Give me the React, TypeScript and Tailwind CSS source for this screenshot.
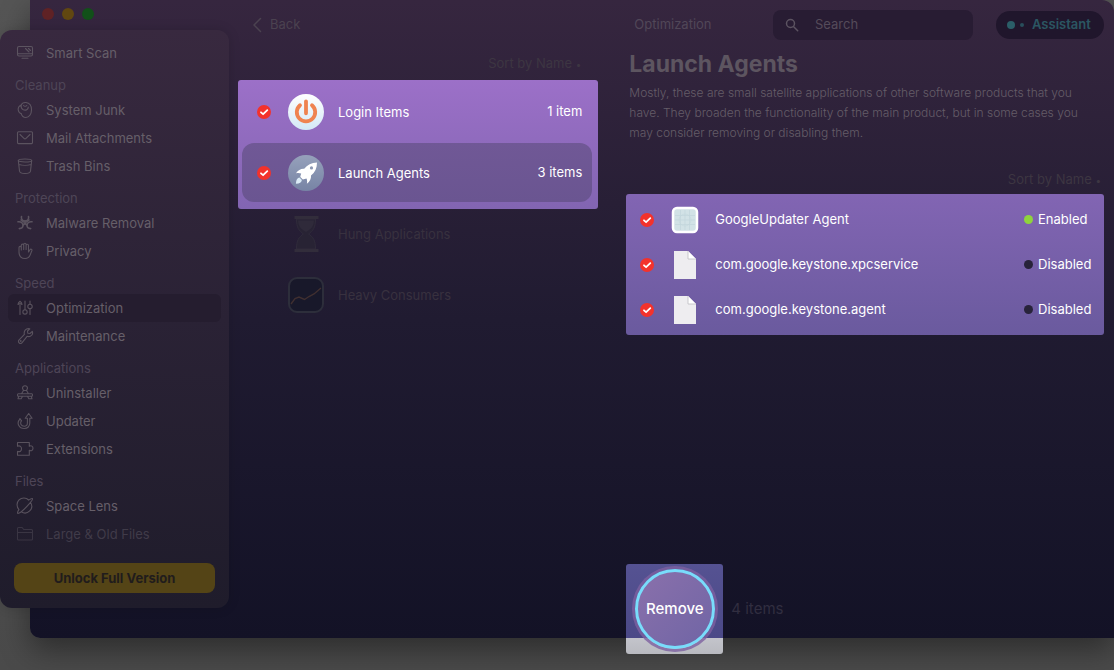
import type { ReactNode } from 'react'

type NavItem = { label: string; icon: ReactNode; active?: boolean; faded?: boolean }
type NavGroup = { title?: string; items: NavItem[] }

function Glyph({ children }: { children: ReactNode }) {
  return (
    <svg
      viewBox="0 0 18 18"
      className="size-[18px] shrink-0 opacity-80"
      fill="none"
      stroke="currentColor"
      strokeWidth="1.1"
      strokeLinecap="round"
      strokeLinejoin="round"
      aria-hidden="true"
    >
      {children}
    </svg>
  )
}

const groups: NavGroup[] = [
  {
    items: [
      {
        label: 'Smart Scan',
        icon: (
          <Glyph>
            <rect x="1.5" y="2.5" width="15" height="9.5" rx="1.5" />
            <path d="M1.5 9.8h15M6 14.3h6M9.5 4.5l3.500 3.500M12.500 4.500l2 2" />
          </Glyph>
        ),
      },
    ],
  },
  {
    title: 'Cleanup',
    items: [
      {
        label: 'System Junk',
        icon: (
          <Glyph>
            <path d="M5 4.2C6 2 8 1.3 10 1.5c3.5.4 5.5 3.5 5.5 7.3 0 4.300-2.300 7.700-5.700 7.700-2.500 0-4-1.700-4.600-3.800" />
            <path d="M5 4.200C3 5 2 6.600 2.200 8.800c.2 1.900 1.300 3.300 3 3.900M5 4.200c0 2 .5 3.800 2.300 4.600 2.500 1 5-.3 5-2.800M7.500 4.500c.8.900 2.500 1 3.300 0" />
          </Glyph>
        ),
      },
      {
        label: 'Mail Attachments',
        icon: (
          <Glyph>
            <rect x="1.500" y="2.800" width="15" height="11.800" rx="1" />
            <path d="m4 5.500 4 3.800c.6.600 1.400.6 2 0l4-3.800" />
          </Glyph>
        ),
      },
      {
        label: 'Trash Bins',
        icon: (
          <Glyph>
            <ellipse cx="9" cy="3.500" rx="6.700" ry="1.500" />
            <path d="M2.300 3.500 3.500 14c.2 1.700 2.300 2.500 5.500 2.500s5.300-.8 5.500-2.500l1.200-10.500M3 7.500c3 1 9 1 12 0" />
          </Glyph>
        ),
      },
    ],
  },
  {
    title: 'Protection',
    items: [
      {
        label: 'Malware Removal',
        icon: (
          <Glyph>
            <g strokeWidth="1.600">
              <path d="M5.500 2.500C4.800 5 6.500 7 9 7s4.200-2 3.500-4.500" />
              <path d="M2 7.800c2.500-.5 5 .8 5 3.500 0 2.300-1.600 3.300-3.700 3.300" />
              <path d="M16 7.800c-2.500-.5-5 .8-5 3.500 0 2.300 1.600 3.300 3.700 3.300" />
              <path d="M9 7v2.500M7 11l2-1.500L11 11M5 6l2.500 2M13 6l-2.500 2" />
            </g>
          </Glyph>
        ),
      },
      {
        label: 'Privacy',
        icon: (
          <Glyph>
            <path d="M3 10V5.500a1.100 1.100 0 0 1 2.300 0V8M5.300 8V3.300a1.200 1.200 0 0 1 2.400 0V7.500M7.700 7V2.400a1.200 1.200 0 0 1 2.400 0V7.500M10.100 7.500V3.400a1.200 1.200 0 0 1 2.400 0V10l1.500-2.300c.7-1.100 2.300-.5 1.900.8l-1.800 4.600c-.9 2.200-2.500 3.400-5 3.400-3.800 0-6.100-2.400-6.100-6.500" />
          </Glyph>
        ),
      },
    ],
  },
  {
    title: 'Speed',
    items: [
      {
        label: 'Optimization',
        active: true,
        icon: (
          <Glyph>
            <path d="M4 15.500V5.800M9 2v8.800M14 15.500V9.800M14 5V2" />
            <path d="M2 5.500C2 3.800 3 2.900 4 2.200c1 .7 2 1.600 2 3.300L4 4.600zM9 10.800a2 2 0 1 0 0 4.300 2 2 0 0 0 0-4.300zM14 5.200a2.200 2.200 0 1 0 0 4.400 2.200 2.200 0 0 0 0-4.400z" />
          </Glyph>
        ),
      },
      {
        label: 'Maintenance',
        icon: (
          <Glyph>
            <path d="M13.800 1.800 11.500 4l.3 2.200 2.200.3 2.300-2.200c.7 2.300-.2 4.300-2 5-1.200.5-2.300.3-3.200 0l-5 6.300a2 2 0 0 1-3.200-2.500l5.500-5.700C7.600 4.500 9.400 1 13.800 1.800z" />
            <circle cx="4.700" cy="14" r=".4" />
          </Glyph>
        ),
      },
    ],
  },
  {
    title: 'Applications',
    items: [
      {
        label: 'Uninstaller',
        icon: (
          <Glyph>
            <path d="M6.500 4.200a2.500 2.500 0 1 1 5 0L10.500 6.500h-3zM7.500 6.500l-2 3.200M10.500 6.500l2 3.200M2.300 9.700h13.400c1.100 0 1.100 2.600 0 2.600H2.300c-1.100 0-1.100-2.600 0-2.600zM2.700 12.300l-.7 2.500h3.200l1.300-2.500M15.300 12.300l.7 2.500h-3.200l-1.300-2.500" />
          </Glyph>
        ),
      },
      {
        label: 'Updater',
        icon: (
          <Glyph>
            <path d="M4 6.800c-4 4.300-1 9.700 4.200 9.700 3.400 0 5.600-2.200 5.600-5.500V6.300h2.300L12.700 1.500 9.200 6.300h2.200V11c0 2-1.200 3.200-3.200 3.200-3.200 0-4.400-2.900-2.800-5.400" />
            <path d="M5.600 8.800 4 6.800" />
          </Glyph>
        ),
      },
      {
        label: 'Extensions',
        icon: (
          <Glyph>
            <path d="M1.500 2.500h11.800v3.800c2-1.200 3.700 0 3.700 2s-1.700 3.200-3.700 2v4.900H1.500v-3.800c2.500.9 4-.6 4-2.600s-1.500-3.500-4-2.600z" />
          </Glyph>
        ),
      },
    ],
  },
  {
    title: 'Files',
    items: [
      {
        label: 'Space Lens',
        icon: (
          <Glyph>
            <path d="M14.500 5.500a6.700 6.700 0 0 1-9.300 9.300M3 12.600A6.700 6.700 0 0 1 12.700 3M12.500 3.100c2-1.300 3.500-1.900 4-1.500 1.100 1.100-10 13.500-14 14.700-1.500.4-1.200-1.200.4-3.700" />
          </Glyph>
        ),
      },
      {
        label: 'Large & Old Files',
        faded: true,
        icon: (
          <Glyph>
            <path d="M1.500 14V3.500c0-.6.400-1 1-1h3.700l1.500 2h7.800c.6 0 1 .4 1 1V14c0 .6-.4 1-1 1h-13c-.6 0-1-.4-1-1zM1.500 7.500h15" />
          </Glyph>
        ),
      },
    ],
  },
]

function Sidebar() {
  return (
    <aside className="z-10 col-start-1 col-end-3 row-start-1 mt-[30px] self-start rounded-xl bg-linear-to-b from-[#38293f] via-[#2a2235] to-[#1f1c2b] pt-[9px] pb-[15px] text-[#665f69] shadow-[0_0_12px_rgba(0,0,0,0.15)]">
      <nav>
        {groups.map((group, i) => (
          <section key={i}>
            {group.title && (
              <h2 className="h-[29px] px-[15px] pt-2 leading-[21px] text-[#4e4557]">{group.title}</h2>
            )}
            <ul>
              {group.items.map((item) => (
                <li key={item.label} className="px-2">
                  <a
                    href="#"
                    className={`flex h-7 items-center gap-3 rounded-md px-2 ${item.active ? 'bg-[#251d2f]' : ''} ${item.faded ? 'text-[#403b49]' : ''}`}
                  >
                    {item.icon}
                    <span className="pt-0.5">{item.label}</span>
                  </a>
                </li>
              ))}
            </ul>
          </section>
        ))}
      </nav>
      <div className="px-3.5 pt-[15px]">
        <button type="button" className="h-[30px] w-full rounded-lg bg-[#544416] pt-0.5 font-bold text-[#211c1c]">
          Unlock Full Version
        </button>
      </div>
    </aside>
  )
}

function RedCheck({ label }: { label: string }) {
  return (
    <label className="relative flex size-3.5 shrink-0">
      <input
        type="checkbox"
        defaultChecked
        aria-label={label}
        className="size-3.5 appearance-none rounded-full border border-white/20 checked:border-transparent checked:bg-[#f3322c]"
      />
      <svg viewBox="0 0 14 14" className="pointer-events-none absolute inset-0" fill="none" stroke="#fff" strokeWidth="1.8" strokeLinecap="round" strokeLinejoin="round" aria-hidden="true">
        <path d="m4 7.300 2.100 1.900L10.300 5.200" />
      </svg>
    </label>
  )
}

function PowerIcon() {
  return (
    <svg viewBox="0 0 36 36" className="size-9 shrink-0" aria-hidden="true">
      <defs>
        <linearGradient id="power-bg" x1="0" y1="0" x2="0" y2="1">
          <stop offset="0" stopColor="#ffffff" />
          <stop offset="1" stopColor="#d3e8f6" />
        </linearGradient>
      </defs>
      <circle cx="18" cy="18" r="18" fill="url(#power-bg)" />
      <path d="M12 11.200a9.200 9.200 0 1 0 12 0M18 7.300v12" fill="none" stroke="#ef8350" strokeWidth="3.800" strokeLinecap="round" />
    </svg>
  )
}

function RocketIcon() {
  return (
    <svg viewBox="0 0 36 36" className="size-9 shrink-0" aria-hidden="true">
      <defs>
        <linearGradient id="rocket-bg" x1="0" y1="0" x2="0" y2="1">
          <stop offset="0" stopColor="#96a1bb" />
          <stop offset="1" stopColor="#7784a5" />
        </linearGradient>
      </defs>
      <circle cx="18" cy="18" r="18" fill="url(#rocket-bg)" />
      <path
        d="M29 7.500c-5.500.1-9.800 2.300-12.800 6.300-3.300-.3-6 1.300-8.200 4.400 2-.4 3.600-.3 5.200.3-.4 1.200-.8 2.300-.9 3.500l2.600 2.500c1.200-.2 2.400-.5 3.600-1 .7 1.600.8 3.300.4 5.200 3-2.300 4.400-5 4.100-8.300 4-3 6-7.200 6-12.900z"
        fill="#fff"
      />
      <circle cx="23.500" cy="12.900" r="1.600" fill="#8c98b3" />
      <path d="M11.500 22.600c-2.200.2-3.400 2.300-3.600 6.200 3.700-.3 5.800-1.500 6-3.800z" fill="#dcecf7" />
    </svg>
  )
}

function HourglassIcon() {
  return (
    <svg viewBox="0 0 36 36" className="size-9 shrink-0" aria-hidden="true">
      <path d="M8.500 3h19c0 9-2.500 11.500-7 15 4.500 3 7 6 7 15h-19c0-9 2.500-12 7-15-4.500-3.500-7-6-7-15z" fill="#282334" stroke="#302b3b" />
      <path d="M10 4.500h16c-.4 6-3 8.500-8 11.500-5-3-7.600-5.500-8-11.500z" fill="#2f2a3a" />
      <path d="M6.500 0h24v3h-24zM6.500 33h24v3h-24z" fill="#322d3b" />
    </svg>
  )
}

function ChartIcon() {
  return (
    <svg viewBox="0 0 36 36" className="size-9 shrink-0" aria-hidden="true">
      <rect x="1" y="1" width="34" height="34" rx="8" fill="#18182a" stroke="#2d2e3b" strokeWidth="2" />
      <path d="m3 27 4-5.500 4-1.500 5.500 2.500 4.500-3 5-2.500 7-6" fill="none" stroke="#402f30" strokeWidth="1.400" />
    </svg>
  )
}

function AppIcon() {
  return (
    <svg viewBox="0 0 28 28" className="size-7 shrink-0" aria-hidden="true">
      <rect x="2" y="2" width="24" height="24" rx="4" fill="#d2e2e6" stroke="#fff" strokeWidth="2.500" />
      <path d="M4 9.500h20M4 14h20M4 18.500h20M9.500 4v20M14 4v20M18.500 4v20" stroke="#c3d6db" strokeWidth=".7" />
      <circle cx="14" cy="14" r="6" fill="none" stroke="#c3d6db" strokeWidth=".6" />
    </svg>
  )
}

function FileIcon() {
  return (
    <svg viewBox="0 0 28 28" className="size-7 shrink-0" aria-hidden="true">
      <path d="M3 0h14l8 8v20H3z" fill="#eeedf0" />
      <path d="m17 0 8 8h-8z" fill="#fff" />
      <path d="M17 0v8h8" fill="none" stroke="#bdbcc2" strokeWidth=".8" />
    </svg>
  )
}

function SortButton() {
  return (
    <button type="button" className="text-[#3d3642]">
      Sort by Name <span className="text-[10px]">•</span>
    </button>
  )
}

const agents = [
  { name: 'GoogleUpdater Agent', enabled: true, icon: <AppIcon /> },
  { name: 'com.google.keystone.xpcservice', enabled: false, icon: <FileIcon /> },
  { name: 'com.google.keystone.agent', enabled: false, icon: <FileIcon /> },
]

function CategoryList() {
  return (
    <section className="min-w-0">
      <div className="flex h-12 items-center px-3.5 pt-0.5">
        <button type="button" className="flex items-center gap-2 text-[#4b4250]">
          <svg viewBox="0 0 10 16" className="h-4 w-2.5" fill="none" stroke="currentColor" strokeWidth="1.500" strokeLinecap="round" strokeLinejoin="round" aria-hidden="true">
            <path d="M8.500 1.500 2 8l6.500 6.500" />
          </svg>
          Back
        </button>
      </div>
      <div className="flex h-8 items-center justify-end pr-[17px]">
        <SortButton />
      </div>
      <ul className="rounded-[3px] bg-linear-to-b from-[#9c70c8] to-[#8265b2] pb-[7px] text-white">
        <li className="flex h-[63px] items-center pr-4 pl-[19px]">
          <RedCheck label="Select Login Items" />
          <div className="ml-[17px] flex flex-1 items-center gap-3.5">
            <PowerIcon />
            <span className="pt-0.5">Login Items</span>
          </div>
          <span>1 item</span>
        </li>
        <li className="mr-1.5 ml-1 flex h-[59px] items-center rounded-xl bg-linear-to-b from-[#705896] to-[#6a5591] pr-2.5 pl-[15px]">
          <RedCheck label="Select Launch Agents" />
          <div className="ml-[17px] flex flex-1 items-center gap-3.5">
            <RocketIcon />
            <span className="pt-0.5">Launch Agents</span>
          </div>
          <span>3 items</span>
        </li>
      </ul>
      <ul className="flex flex-col gap-[11px] pl-[50px] text-[#38313f]">
        <li className="flex h-[50px] items-center gap-3.5">
          <HourglassIcon />
          <span className="pt-0.5">Hung Applications</span>
        </li>
        <li className="flex h-[50px] items-center gap-3.5">
          <ChartIcon />
          <span className="pt-0.5">Heavy Consumers</span>
        </li>
      </ul>
    </section>
  )
}

function Details() {
  return (
    <section className="flex min-w-0 flex-col">
      <header className="flex h-12 items-center pt-0.5">
        <span className="flex-1 pl-2 text-[#514758]">Optimization</span>
        <label className="flex h-[30px] w-[200px] items-center gap-4 rounded-lg bg-[#281c33] px-3 text-[#5c5361]">
          <svg viewBox="0 0 14 14" className="size-3.5 shrink-0" fill="none" stroke="currentColor" strokeWidth="1.500" strokeLinecap="round" aria-hidden="true">
            <circle cx="5.500" cy="5.500" r="4" />
            <path d="m8.700 8.700 4 4" />
          </svg>
          <input
            type="search"
            placeholder="Search"
            aria-label="Search"
            className="w-full min-w-0 bg-transparent outline-none placeholder:text-[#554b5a]"
          />
        </label>
        <button type="button" className="ml-[23px] flex h-7 w-[108px] items-center rounded-full bg-[#20162c] pl-[11px] font-semibold text-[#2b5662]">
          <span className="size-2 rounded-full bg-[#2b5e68]" />
          <span className="mr-2 ml-[5px] size-1 rounded-full bg-[#294e5c]" />
          Assistant
        </button>
      </header>
      <div className="px-[3px]">
        <h1 className="text-[23px] leading-8 font-bold text-[#5d5560]">Launch Agents</h1>
        <p className="mt-[3px] pr-4 text-xs leading-5 font-light text-[#655d68]">
          Mostly, these are small satellite applications of other software products that you have. They broaden the
          functionality of the main product, but in some cases you may consider removing or disabling them.
        </p>
      </div>
      <div className="mt-[21px] flex h-[30px] items-center justify-end pt-0.5 pr-[3px]">
        <SortButton />
      </div>
      <table className="block rounded-[3px] bg-linear-to-b from-[#8265b3] to-[#6a5a9e] py-[3px] text-white">
        <tbody className="block">
          {agents.map((agent) => (
            <tr key={agent.name} className="flex h-[45px] items-center pr-3 pl-3.5">
              <td>
                <RedCheck label={`Select ${agent.name}`} />
              </td>
              <td className="ml-[17px] flex min-w-0 flex-1 items-center gap-4">
                {agent.icon}
                {agent.name}
              </td>
              <td className="flex w-[68px] items-center gap-[5px]">
                <span className={`size-[9px] shrink-0 rounded-full ${agent.enabled ? 'bg-[#8fd43c]' : 'bg-[#28233a]'}`} />
                {agent.enabled ? 'Enabled' : 'Disabled'}
              </td>
            </tr>
          ))}
        </tbody>
      </table>
      <footer className="mt-auto -mb-4 flex items-center gap-2">
        <div className="flex h-[90px] w-[97px] items-center justify-center rounded-[3px] bg-[linear-gradient(to_bottom,#555292_0,#4b4987_74px,#c3c4cb_74px,#b9bac0_90px)]">
          <button
            type="button"
            className="size-20 rounded-full border-3 border-[#79dcfb] bg-linear-to-br from-[#8a70ab] to-[#7065a5] text-[15px] font-medium text-white shadow-[0_0_0_3px_rgba(125,96,160,0.8)]"
          >
            Remove
          </button>
        </div>
        <span className="text-[15px] text-[#312e40]">4 items</span>
      </footer>
    </section>
  )
}

export default function App() {
  return (
    <div className="grid min-h-screen grid-cols-[30px_199px_minmax(0,1fr)] bg-linear-to-b from-[#555555] to-[#4a4a4a] pb-8 font-[Inter,'Liberation_Sans',sans-serif] text-[13px]">
      <main className="col-start-2 col-end-4 row-start-1 grid grid-cols-[199px_minmax(0,1fr)] rounded-tr-xl rounded-bl-[10px] bg-linear-to-b from-[#36263f] via-[#201b31] to-[#131226] shadow-[0_12px_30px_rgba(0,0,0,0.4)]">
        <div className="flex gap-2 px-3 py-2">
          <span className="size-3 rounded-full bg-[#5f2225]" />
          <span className="size-3 rounded-full bg-[#614710]" />
          <span className="size-3 rounded-full bg-[#115019]" />
        </div>
        <div className="grid grid-cols-[minmax(0,43fr)_minmax(0,57fr)] gap-7 pr-2.5 pl-[9px]">
          <CategoryList />
          <Details />
        </div>
      </main>
      <Sidebar />
    </div>
  )
}
